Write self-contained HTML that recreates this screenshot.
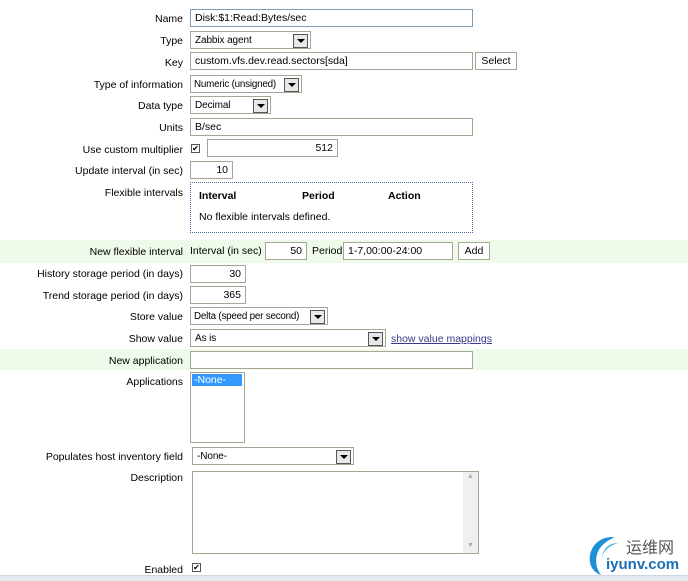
<!DOCTYPE html>
<html><head><meta charset="utf-8"><style>
*{box-sizing:border-box;margin:0;padding:0}
body{width:688px;height:581px;background:#fff;position:relative;overflow:hidden;font-family:"Liberation Sans","DejaVu Sans",sans-serif;font-size:10.5px;color:#000}
.a{position:absolute}
.l{position:absolute;right:505px;text-align:right;white-space:nowrap}
.i{position:absolute;border:1px solid #a8a595;background:#fff;height:18px;line-height:16px;padding:0 4px;white-space:nowrap;overflow:hidden}
.r{text-align:right}
.s{font-size:10px;letter-spacing:-0.1px;line-height:17px}
.s::after{content:"";position:absolute;right:2px;top:2px;width:13px;height:12px;border:1px solid #555;background:#e8e8e8}
.s::before{content:"";position:absolute;right:5px;top:7px;border-left:4px solid transparent;border-right:4px solid transparent;border-top:4px solid #000;z-index:2}
.g{position:absolute;left:0;width:688px;background:#eefaea}
.cb{position:absolute;width:9px;height:9px;border:1px solid #555;background:#fff;font-size:8px;line-height:7px;text-align:center}
.b{position:absolute;border:1px solid #a8a595;background:#fff;height:18px;line-height:16px;text-align:center}
</style></head><body>
<div class="g" style="top:240px;height:23px"></div>
<div class="g" style="top:349px;height:21px"></div>

<div class="l" style="top:13px">Name</div>
<div class="i" style="left:190px;top:9px;width:283px;border-color:#7f9db9">Disk:$1:Read:Bytes/sec</div>
<div class="l" style="top:35px">Type</div>
<div class="i s" style="left:190px;top:31px;width:121px">Zabbix agent</div>
<div class="l" style="top:57px">Key</div>
<div class="i" style="left:190px;top:52px;width:283px">custom.vfs.dev.read.sectors[sda]</div>
<div class="b" style="left:475px;top:52px;width:42px">Select</div>
<div class="l" style="top:79px">Type of information</div>
<div class="i s" style="left:190px;top:75px;width:112px;padding-left:3px;font-size:9.8px;letter-spacing:-0.2px">Numeric (unsigned)</div>
<div class="l" style="top:100px">Data type</div>
<div class="i s" style="left:190px;top:96px;width:81px">Decimal</div>
<div class="l" style="top:122px">Units</div>
<div class="i" style="left:190px;top:118px;width:283px">B/sec</div>
<div class="l" style="top:144px">Use custom multiplier</div>
<div class="cb" style="left:191px;top:144px">✔</div>
<div class="i r" style="left:207px;top:139px;width:131px">512</div>
<div class="l" style="top:165px">Update interval (in sec)</div>
<div class="i r" style="left:190px;top:161px;width:43px">10</div>
<div class="l" style="top:187px">Flexible intervals</div>
<div class="a" style="left:190px;top:182px;width:283px;height:51px;border:1px dotted #4a6aa5"></div>
<div class="a" style="left:199px;top:190px;font-weight:bold">Interval</div>
<div class="a" style="left:302px;top:190px;font-weight:bold">Period</div>
<div class="a" style="left:388px;top:190px;font-weight:bold">Action</div>
<div class="a" style="left:199px;top:211px">No flexible intervals defined.</div>

<div class="l" style="top:246px">New flexible interval</div>
<div class="a" style="left:190px;top:245px">Interval (in sec)</div>
<div class="i r" style="left:265px;top:242px;width:42px">50</div>
<div class="a" style="left:312px;top:245px">Period</div>
<div class="i" style="left:343px;top:242px;width:110px">1-7,00:00-24:00</div>
<div class="b" style="left:458px;top:242px;width:32px">Add</div>
<div class="l" style="top:268px">History storage period (in days)</div>
<div class="i r" style="left:190px;top:265px;width:56px">30</div>
<div class="l" style="top:290px">Trend storage period (in days)</div>
<div class="i r" style="left:190px;top:286px;width:56px">365</div>
<div class="l" style="top:311px">Store value</div>
<div class="i s" style="left:190px;top:307px;width:138px;padding-left:3px;font-size:9.8px;letter-spacing:-0.2px">Delta (speed per second)</div>
<div class="l" style="top:333px">Show value</div>
<div class="i s" style="left:190px;top:329px;width:196px">As is</div>
<div class="a" style="left:391px;top:333px;color:#3a3a8a;text-decoration:underline">show value mappings</div>
<div class="l" style="top:355px">New application</div>
<div class="i" style="left:190px;top:351px;width:283px"></div>
<div class="l" style="top:376px">Applications</div>
<div class="a" style="left:190px;top:372px;width:55px;height:71px;border:1px solid #a8a595"></div>
<div class="a" style="left:192px;top:374px;width:50px;height:12px;background:#3399ff;color:#fff;line-height:12px;padding-left:2px">-None-</div>
<div class="l" style="top:451px">Populates host inventory field</div>
<div class="i s" style="left:192px;top:447px;width:162px">-None-</div>
<div class="l" style="top:472px">Description</div>
<div class="a" style="left:192px;top:471px;width:287px;height:83px;border:1px solid #a8a595"></div>
<div class="a" style="left:463px;top:472px;width:15px;height:81px;background:#f0f0f0;color:#aaa;font-size:7px;text-align:center;line-height:10px">▲<div style="position:absolute;bottom:2px;width:15px">▼</div></div>
<div class="l" style="top:564px">Enabled</div>
<div class="cb" style="left:192px;top:563px">✔</div>
<div class="a" style="left:0;top:575px;width:688px;height:6px;background:#e4e8ee;border-top:1px solid #d0d6de"></div>

<svg class="a" style="left:586px;top:534px" width="38" height="42"><path d="M28 3 C10 2 0 18 5 32 C8 38 12 40 15 41 C8 32 8 17 19 9 C22 6 26 5 28 3Z" fill="#1e90d8"/><path d="M32 9 C19 9 13 21 17 32 C13 22 19 13 32 9Z" fill="#4ab0ea"/></svg>
<div class="a" style="left:626px;top:537px;font-size:16px;color:#555;font-family:'Noto Sans CJK SC',sans-serif;line-height:19px">运维网</div>
<div class="a" style="left:606px;top:556px;font-size:15px;font-weight:bold;color:#1a6fb5;line-height:18px">iyunv.com</div>
</body></html>
